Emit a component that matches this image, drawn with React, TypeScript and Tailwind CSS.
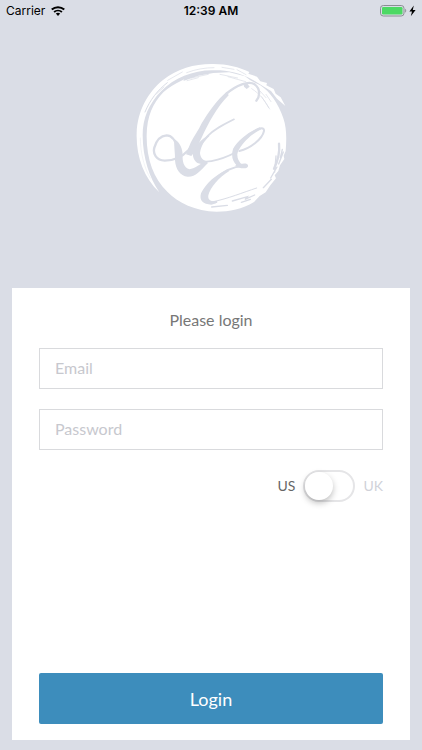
import { useState } from 'react'

function WifiIcon() {
  return (
    <svg viewBox="0 0 28 20" className="h-[10px] w-[14px]" fill="none" aria-hidden="true">
      <path d="M1.5 7.2C8.6 .7 19.4 .7 26.5 7.2" stroke="#000" strokeWidth="4" />
      <path d="M6.2 12.1C10.6 8.2 17.4 8.2 21.8 12.1" stroke="#000" strokeWidth="3.8" />
      <path d="M9.6 15.2C12.2 13 15.8 13 18.4 15.2L14 19.8Z" fill="#000" />
    </svg>
  )
}

function BatteryIcon() {
  return (
    <svg viewBox="0 0 36 12" className="h-3 w-9" aria-hidden="true">
      <rect x=".5" y=".5" width="23.5" height="10.5" rx="2.8" fill="none" stroke="#8b8e93" />
      <rect x="2" y="2" width="20.5" height="7.5" rx="1.3" fill="#4cd964" />
      <path d="M25.2 3.8C26.6 4.4 26.6 7.1 25.2 7.7Z" fill="#8b8e93" />
      <path d="M33.8 .6L29.4 6.5H32L30.8 11.2L35.6 5.1H32.8Z" fill="#000" />
    </svg>
  )
}

function Logo() {
  return (
    <svg viewBox="0 0 495 495" className="size-[165px]" fill="none" role="img" aria-label="LE">
      {/* brushed disc */}
      <g fill="#fff">
        <path d="M50 240C51 185 68 145 100 112C115 98 134 87 154 77L163 73L160 78L205 62L250 54L298 52L345 64L361 76L391 91C420 110 446 148 460 190C470 220 470 250 467 288L461 302L463 312L450 331L445 348L434 361L438 370L421 391L407 412L389 423L372 441C337 462 298 470 260 470C196 468 144 443 112 410C70 370 49 310 50 240Z" />
        <path d="M88 412C41 368 18 303 20 235C22 168 54 111 99 75C144 40 195 26 250 27C292 27 327 36 358 51L355 56L381 65L391 79L411 84L409 91L431 102L437 116L452 127L466 153L441 131L423 108L397 92L369 75C329 52 290 45 249 46C192 45 132 69 94 108C56 146 38 191 38 240C38 310 59 368 88 412Z" />
      </g>

      {/* dry brush marks */}
      <g stroke="#dadde6" strokeLinecap="round">
        <path d="M45 171C60 135 82 106 112 83" strokeWidth="3" />
        <path d="M80 116L102 96M113 76L157 51" strokeWidth="2" />
        <path d="M170 53C196 43 225 38 252 38M276 37L312 43M321 44L348 59" strokeWidth="2" />
        <path d="M184 69L235 58M171 77L205 68M270 58L323 69M294 65L347 80" strokeWidth="2" />
        <path d="M365 101C389 116 405 137 416 158M390 108L408 128M395 125L419 162M408 118L423 140" strokeWidth="2" />
        <path d="M31 249C31 294 43 341 61 369" strokeWidth="1" />
        <path d="M447 266C450 294 442 321 432 341" strokeWidth="7" />
        <path d="M438 303L434 351M457 283L451 308M441 336L422 369M460 291L446 327" strokeWidth="4" />
        <path d="M307 438L352 425L345 433L374 420M334 442L361 433M400 398L424 373M245 456L292 451" strokeWidth="4" />
      </g>

      {/* monogram: thin base lines */}
      <g stroke="#dadde6" strokeLinecap="round" strokeLinejoin="round">
        <path d="M379 137C390 124 392 102 374 88C356 76 319 90 288 117C257 146 237 182 221 212C207 239 192 266 176 285C155 307 130 317 104 317C79 316 68 297 73 278C79 257 92 242 110 241C128 241 137 259 143 280" strokeWidth="7" />
        <path d="M312 193C278 210 252 223 232 244C211 266 199 292 205 309C213 325 239 321 263 314C287 307 308 298 322 288" strokeWidth="5" />
        <path d="M328 288C362 280 397 252 402 228C403 217 391 218 377 226C354 239 330 262 321 285C316 303 322 321 335 332" strokeWidth="6" />
        <path d="M346 334C310 330 277 352 251 375C230 394 216 419 220 434C226 446 243 442 259 441" strokeWidth="6" />
        <path d="M246 441C297 430 337 413 380 399" strokeWidth="3" />
      </g>

      {/* monogram: swelling of the strokes */}
      <g fill="#dadde6">
        <path d="M291 110C261 134 233 174 215 205C206 225 192 243 182 263L168 298L184 303L200 281C204 269 213 253 220 237C235 208 259 157 296 121Z" />
        <path d="M133 252C131 274 136 294 135 316C137 342 150 364 173 365C197 366 210 348 234 324L226 319C206 330 193 341 179 343C160 338 157 317 158 300C158 282 150 262 133 252Z" />
        <path d="M235 240C213 255 197 270 188 292C188 315 200 330 219 326L237 320C220 318 211 309 210 294C213 274 222 258 238 244Z" />
        <path d="M390 217C354 231 324 256 309 282C303 302 307 320 322 332L336 335L325 319C318 305 320 293 328 282C341 259 366 236 394 223Z" />
        <path d="M321 324C331 330 341 322 351 327C359 334 351 341 341 340C330 340 323 335 316 332Z" />
        <path d="M292 343C258 359 227 386 213 415C207 437 219 448 244 449L258 445L259 439C241 440 233 434 235 421C241 396 267 367 298 348Z" />
        <path d="M340 83L353 87L359 95L350 102L342 95Z" />
      </g>
    </svg>
  )
}

export default function App() {
  const [email, setEmail] = useState('')
  const [password, setPassword] = useState('')
  const [isUk, setIsUk] = useState(false)

  const inputClass =
    'h-[41px] w-full border border-[#d9dadd] bg-white px-[15px] pb-0.5 text-base text-[#666] outline-none placeholder:text-[#c7c8ce] focus:border-[#3d8dbc]'

  return (
    <div className="flex min-h-screen flex-col bg-[#dadde6] font-['Lato','Open_Sans',sans-serif]">
      {/* Status bar */}
      <header className="grid h-[22px] grid-cols-3 items-center px-1.5 font-['Inter',sans-serif] text-xs text-black">
        <div className="flex items-center gap-1.5">
          <span>Carrier</span>
          <WifiIcon />
        </div>
        <span className="text-center font-semibold">12:39 AM</span>
        <div className="flex justify-end">
          <BatteryIcon />
        </div>
      </header>

      <div className="flex h-[266px] justify-center pt-[33px] pl-0.5">
        <Logo />
      </div>

      <form
        className="mx-3 mb-2.5 flex flex-1 flex-col bg-white px-[27px] pt-5 pb-4"
        onSubmit={(e) => e.preventDefault()}
      >
        <h1 className="text-center text-base leading-6 text-[#777]">Please login</h1>

        <div className="mt-4 flex flex-col gap-5">
          <input
            type="email"
            aria-label="Email"
            placeholder="Email"
            value={email}
            onChange={(e) => setEmail(e.target.value)}
            className={inputClass}
          />
          <input
            type="password"
            aria-label="Password"
            placeholder="Password"
            value={password}
            onChange={(e) => setPassword(e.target.value)}
            className={inputClass}
          />
        </div>

        {/* Region switch */}
        <label className="mt-5 flex cursor-pointer items-center gap-2 self-end text-sm">
          <span className={isUk ? 'text-[#d0d2d9]' : 'text-[#666]'}>US</span>
          <input
            type="checkbox"
            role="switch"
            aria-label="Use UK region"
            checked={isUk}
            onChange={(e) => setIsUk(e.target.checked)}
            className="flex h-8 w-[52px] cursor-pointer appearance-none items-center rounded-full border-2 border-[#e5e5e7] bg-white before:size-7 before:rounded-full before:bg-white before:shadow-[0_3px_6px_rgba(0,0,0,0.25)] before:transition-transform checked:before:translate-x-5"
          />
          <span className={isUk ? 'text-[#666]' : 'text-[#d0d2d9]'}>UK</span>
        </label>

        <button
          type="submit"
          className="mt-auto h-[51px] w-full cursor-pointer rounded-xs bg-[#3d8dbc] text-lg text-white"
        >
          Login
        </button>
      </form>
    </div>
  )
}
